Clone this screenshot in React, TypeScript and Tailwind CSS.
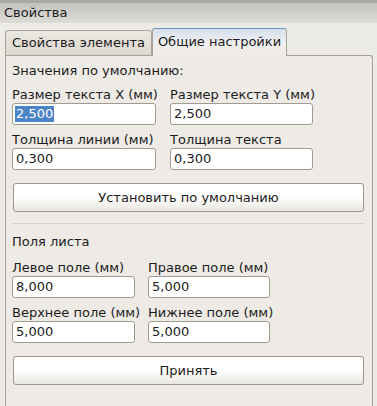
const font = { fontFamily: '"DejaVu Sans", Verdana, sans-serif' };

function Field({ label, value, selected }: { label: string; value: string; selected?: boolean }) {
  return (
    <div className="flex flex-col">
      <div className="h-[16px] leading-[16px] whitespace-nowrap">{label}</div>
      <div className="h-[22px] bg-white border border-[#a29c90] rounded-[3px] pl-[2px] flex items-center">
        {selected ? (
          <span className="bg-[#4d84c8] text-white leading-[16px] px-[1px]">{value}</span>
        ) : (
          <span className="leading-[16px] px-[1px]">{value}</span>
        )}
      </div>
    </div>
  );
}

function Button({ children }: { children: React.ReactNode }) {
  return (
    <div className="ml-[1px] w-[351px] h-[29px] border border-[#9c968b] rounded-[3px] bg-gradient-to-b from-white via-white to-[#e9e6df] flex items-center justify-center">
      {children}
    </div>
  );
}

export default function App() {
  return (
    <div
      className="w-[377px] h-[406px] overflow-hidden bg-[#edebe6] text-[13px] text-[#1c1c1c] flex flex-col"
      style={font}
    >
      <div className="h-[23px] shrink-0 border-t-[3px] border-[#a9a8a4] bg-gradient-to-b from-[#c3c2be] to-[#dedcd7] pl-[4px] flex items-center">
        Свойства
      </div>

      <div className="h-[5px] shrink-0" />

      <div className="flex items-end pl-[5px] h-[27px] shrink-0 relative z-10">
        <div className="w-[147px] h-[25px] border border-b-0 border-[#a8a296] rounded-t-[3px] bg-gradient-to-b from-[#ebe8e2] to-[#ddd8cf] flex items-center justify-center">
          Свойства элемента
        </div>
        <div className="w-[135px] h-[28px] -mb-[1px] border border-b-0 border-[#a8a296] border-t-[#6f93bd] rounded-t-[3px] bg-gradient-to-b from-[#d5e0ec] via-[#efeff0] to-[#efebe6] flex items-center justify-center pb-[1px]">
          Общие настройки
        </div>
      </div>

      <div className="ml-[5px] w-[368px] flex-1 border border-b-0 border-[#a8a296] rounded-tr-[3px] bg-[#eeebe6] pl-[6px] pt-[7px] flex flex-col">
        <div className="h-[16px] leading-[16px]">Значения по умолчанию:</div>
        <div className="mt-[8px] grid grid-cols-[144px_143px] gap-x-[14px] gap-y-[7px]">
          <Field label="Размер текста X (мм)" value="2,500" selected />
          <Field label="Размер текста Y (мм)" value="2,500" />
          <Field label="Толщина линии (мм)" value="0,300" />
          <Field label="Толщина текста" value="0,300" />
        </div>
        <div className="mt-[13px]">
          <Button>Установить по умолчанию</Button>
        </div>
        <div className="mt-[11px] w-[353px] h-[1px] bg-[#d8d3ca]" />
        <div className="mt-[10px] h-[16px] leading-[16px]">Поля листа</div>
        <div className="mt-[10px] grid grid-cols-[123px_122px] gap-x-[13px] gap-y-[7px]">
          <Field label="Левое поле (мм)" value="8,000" />
          <Field label="Правое поле (мм)" value="5,000" />
          <Field label="Верхнее поле (мм)" value="5,000" />
          <Field label="Нижнее поле (мм)" value="5,000" />
        </div>
        <div className="mt-[13px]">
          <Button>Принять</Button>
        </div>
      </div>
    </div>
  );
}
